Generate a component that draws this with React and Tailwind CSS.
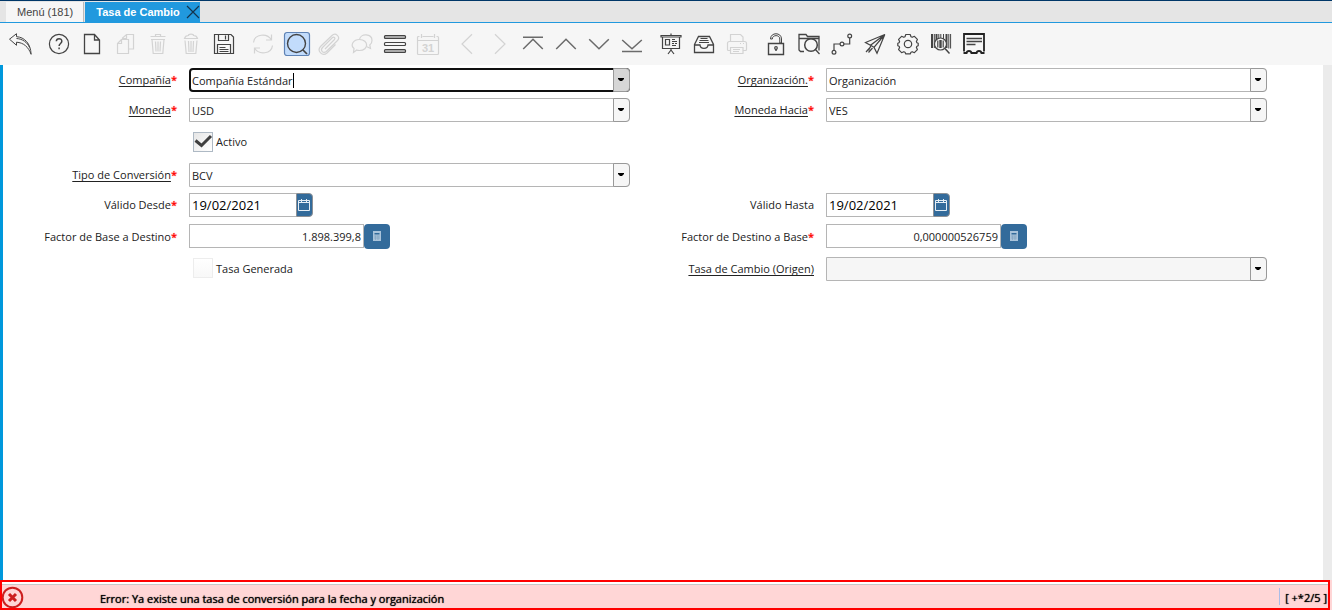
import React, { useState } from 'react';
import clsx from 'clsx';

const ICONS = {
  undo: <path d="M2.500 7.200 9.500 1.700v3c8 .4 14.200 6.800 14.600 17.600C21.500 15 16.500 10.600 9.500 10.200v3.100l-7-6.100M9.500 6.500c6 .3 11 4 13 9" strokeWidth="1" />,
  help: (
    <>
      <circle cx="13" cy="12" r="9.600" />
      <path d="M10.300 9.300c.2-3.600 5.600-3.500 5.500 0 0 2.200-2.700 2.200-2.700 4.700M13.100 15.500v1.700" strokeWidth="1.500" />
    </>
  ),
  file: <path d="M5.500 2.500h10l5 5.500v13.500h-15zM15.500 2.500v5.500h5" strokeWidth="1.300" />,
  copy: (
    <>
      <path d="M9.500 7.500 5.500 11.500v10h11v-14zM9.500 7.500v4h-4" />
      <path d="M10.500 7V6l4-3.500h7v14.500h-5M14.500 2.500v4h-4" />
    </>
  ),
  trash: (
    <path d="M5.500 4.500h15M10.500 4.500v-2h5v2M6 7.500h14M7 7.500l1.200 14h9.600l1.200-14M10.500 9.500l.5 10M13 9.500v10M15.500 9.500l-.5 10" />
  ),
  trashAll: (
    <path d="M6.500 6.500c.5-2 2.500-3 4-3 0-1.800 5-1.800 5 0 1.500 0 3.500 1 4 3zM7 8.500l1.200 13h9.600l1.200-13M10.500 9l.5 11M13 9v11M15.500 9l-.5 11" />
  ),
  save: (
    <>
      <path d="M3.500 2.500h16.500l2.500 2.500v16.500h-19z" />
      <path d="M7.500 2.500v6h10v-6M14.500 3.500v4M6.500 21v-8.500h13v8.500" />
      <path d="M8.500 15.500h6M8.500 17.500h9M8.500 19.500h9" />
    </>
  ),
  refresh: (
    <path d="M3.500 10.500C4.500 2 17 .5 21.500 8M21.500 2.500V8H16M22.500 13.500C21.500 22 9 23.500 4.500 16M4.500 21.500V16H10" />
  ),
  find: (
    <>
      <rect x="1.500" y=".5" width="25" height="23" rx="2.500" fill="#c2dcfc" stroke="#5f83b5" />
      <circle cx="13.500" cy="11.500" r="9" strokeWidth="1.400" />
      <path d="m20 18 4 4" strokeWidth="1.700" />
    </>
  ),
  attach: (
    <path d="M9 17 18.500 7.500c1.200-1.400-.6-3.200-2-2L6.500 15.500c-2.800 3.200.9 6.500 3.800 4L21.500 8.500c3.200-3.600-1.800-8.500-5.500-5L4.500 14.500c-4 4.800 2 10.200 6.500 6.500l8.500-8.500" />
  ),
  chat: (
    <>
      <path d="M10.500 7.500c1-6.500 12.500-6 12.500 1 0 2.200-1 3.500-2.200 4.500l.7 3.500-3.500-1.800" />
      <path d="M10.500 7.500c9.500 0 9.500 11 0 11-1.200 0-2 0-2.800-.5l-3.200 2.500.5-4c-4-3.500-.8-9 5.500-9z" />
    </>
  ),
  grid: (
    <>
      <rect x="2.500" y="3.500" width="21" height="3" rx="1" fill="#aaa" />
      <rect x="2.500" y="10.500" width="21" height="3" rx="1" />
      <rect x="2.500" y="17.500" width="21" height="3" rx="1" fill="#aaa" />
    </>
  ),
  calendar: (
    <>
      <path d="M4.500 4.500h-1c-.7 0-1 .3-1 1v16c0 .7.300 1 1 1h19c.7 0 1-.3 1-1v-16c0-.7-.3-1-1-1h-1M7.500 4.500h11M2.500 8.500h21M6.500 2v4M19.500 2v4" />
      <text x="13" y="19.500" textAnchor="middle" fontSize="11" fontWeight="bold" fontFamily="Liberation Sans, sans-serif" fill="currentColor" stroke="none">31</text>
    </>
  ),
  prev: <path d="M18 2.200 8 12l10 9.800" />,
  next: <path d="m8 2.200 10 9.800L8 21.800" />,
  first: <path d="M3 5.300h20M3.200 17 13 7.300 22.800 17" strokeWidth="1.500" />,
  up: <path d="M3.200 17 13 7.300 22.800 17" strokeWidth="1.500" />,
  down: <path d="M3.200 7.200 13 16.700l9.800-9.500" strokeWidth="1.500" />,
  last: <path d="M3 19.500h20M3.200 8 13 16.800 22.800 8" strokeWidth="1.500" />,
  report: (
    <>
      <path d="M3 3.500h20v1.500H3zM13 1.500v2M4.500 5v11.500h17V5M13 17v2M13 18l-3 4M13 18l3 4" strokeWidth="1.200" />
      <path d="M7.500 7.500h4v5.500h-4zM14 7.500h3M14 9.500h5M14 11.500h2M17 11.500h2M14 13.500h4" />
    </>
  ),
  archive: (
    <>
      <path d="M3.500 12.500 7.500 4.500h11l4 8v8h-19zM3.500 13h5.500c.4 4.500 7.600 4.500 8 0h5.500" strokeWidth="1.300" />
      <path d="M9.500 6.500h7M8.500 8.500h9M8 10.500h10" />
    </>
  ),
  print: (
    <>
      <path d="M6.500 9v-6.500h10l2.500 2.500v4M6.500 18.500h-2c-.7 0-1-.3-1-1v-6c0-1.500 1-2 2-2h15c1 0 2 .5 2 2v6c0 .7-.3 1-1 1h-2.500M6.500 15.500h12.500v6h-12.500z" />
      <path d="M9 17.500h7M9 19.500h6M16 11.500h1M19 11.500h1" />
    </>
  ),
  lock: (
    <>
      <path d="M5.500 11.500h15v11h-15z" strokeWidth="1.400" />
      <path d="M7.500 7c0-7 11-7 11 0v4h-1.700V7c0-4.500-7.500-4.500-7.500 0z" strokeWidth="1" />
      <circle cx="13" cy="16" r="1.300" />
      <path d="M13 17v2" strokeWidth="1.500" />
    </>
  ),
  zoomFolder: (
    <>
      <path d="M8 19.500h-3.500l-1.500-1.500v-15.500h7l1.500 2h11.500v14M3 6.500h20M19 17l4.500 5" strokeWidth="1.300" />
      <circle cx="15" cy="13" r="6.300" strokeWidth="1.500" />
    </>
  ),
  workflow: (
    <>
      <circle cx="5" cy="20.200" r="1.900" />
      <circle cx="13" cy="12" r="1.900" />
      <circle cx="20.700" cy="4" r="1.900" />
      <path d="M5 18.500v-6.500h6M15 12h5.700V6" />
    </>
  ),
  send: <path d="M22.800 2.500 3.500 10.500l5 2.800zM22.800 2.500 8.500 13.300l3.500 2zM22.800 2.500 12 15.300l3 6zM4 20l4.500-5M6.500 20.500l4-4.500M9 13.500l-2.500 5" />,
  gear: (
    <>
      <path d="M10.800 2.500h4.400l.8 2.300 1.200.5 2.200-1 3 3.100-1 2.200.5 1.200 1.300.5v2.400l-1.300.5-.5 1.200 1 2.200-3 3.100-2.200-1-1.200.5-.8 1.700h-4.400l-.8-1.700-1.200-.5-2.200 1-3-3.100 1-2.200-.5-1.200-1.300-.5v-2.400l1.300-.5.5-1.200-1-2.200 3-3.100 2.200 1 1.200-.5z" strokeLinejoin="round" />
      <circle cx="13" cy="12" r="3.700" />
    </>
  ),
  barcode: (
    <>
      <path d="M4 2v14M8.500 2v14M18.500 2v14" strokeWidth="2" />
      <path d="M6.300 2v14M10.800 2v5M12.800 2v4M15.500 2v5M20.800 2v14.500M22.600 2v14.500" strokeWidth="1" />
      <circle cx="12.500" cy="12" r="6" fill="#f6f6f6" />
      <path d="M9.800 8.500v7M15.200 8.500v7" strokeWidth="1.200" />
      <path d="M12.500 8v8" strokeWidth="2.400" />
      <path d="m17 16.500 4.500 5" strokeWidth="1.500" />
    </>
  ),
  receipt: (
    <>
      <path d="M3 19.500v-17.500h20v17.500" stroke="#222" strokeWidth="1.800" />
      <path d="M2.500 21h3c.5-2.800 4.500-2.800 5 0h5c.5-2.800 4.500-2.800 5 0h3" stroke="#222" strokeWidth="2" />
      <path d="M5.500 6.500h15.500M5.500 9.500h15.500M5.500 12.500h9" strokeWidth="1.700" />
    </>
  ),
};

const TOOLBAR = [
  [{ icon: 'undo', title: 'Deshacer' }],
  [
    { icon: 'help', title: 'Ayuda' },
    { icon: 'file', title: 'Nuevo' },
    { icon: 'copy', title: 'Copiar', disabled: true },
    { icon: 'trash', title: 'Eliminar', disabled: true },
    { icon: 'trashAll', title: 'Eliminar selección', disabled: true },
    { icon: 'save', title: 'Guardar' },
  ],
  [
    { icon: 'refresh', title: 'Refrescar', disabled: true },
    { icon: 'find', title: 'Encontrar' },
    { icon: 'attach', title: 'Anexo', disabled: true },
    { icon: 'chat', title: 'Chat', disabled: true },
    { icon: 'grid', title: 'Cambiar vista' },
    { icon: 'calendar', title: 'Historial', disabled: true },
  ],
  [
    { icon: 'prev', title: 'Registro padre', disabled: true },
    { icon: 'next', title: 'Registro detalle', disabled: true },
    { icon: 'first', title: 'Primero', soft: true },
    { icon: 'up', title: 'Anterior', soft: true },
    { icon: 'down', title: 'Siguiente', soft: true },
    { icon: 'last', title: 'Último', soft: true },
  ],
  [
    { icon: 'report', title: 'Informe' },
    { icon: 'archive', title: 'Archivo' },
    { icon: 'print', title: 'Imprimir', disabled: true },
  ],
  [
    { icon: 'lock', title: 'Bloquear' },
    { icon: 'zoomFolder', title: 'Visor' },
    { icon: 'workflow', title: 'Flujo de trabajo' },
    { icon: 'send', title: 'Solicitudes' },
    { icon: 'gear', title: 'Proceso' },
    { icon: 'barcode', title: 'Producto' },
    { icon: 'receipt', title: 'Personalizar' },
  ],
];

const ToolButton = ({ icon, title, disabled, soft }) => (
  <button
    type="button"
    title={title}
    disabled={disabled}
    className={clsx(
      'flex w-[33px] items-center justify-center',
      disabled ? 'text-[#d3d3d3]' : soft ? 'text-[#6b6b6b]' : 'text-[#444]'
    )}
  >
    <svg viewBox="0 0 25 24" className="h-6 w-[25px] overflow-visible" fill="none" stroke="currentColor" strokeWidth="1.200">
      {ICONS[icon]}
    </svg>
  </button>
);

const Label = ({ htmlFor, link, required, children }) => (
  <label htmlFor={htmlFor} className="pb-px text-right whitespace-nowrap">
    <span className={clsx(link && 'underline decoration-1 underline-offset-2 [text-decoration-skip-ink:none]')}>
      {children}
    </span>
    {required && <span className="text-[#f00] [text-shadow:0_0_1px_#f00]">*</span>}
  </label>
);

const Field = ({ children }) => (
  <div className="grid grid-cols-[174px_1fr] items-center gap-3 pr-[10px]">{children}</div>
);

const Combo = ({ id, label, required, value, active, disabled }) => (
  <Field>
    <Label htmlFor={id} link required={required}>{label}</Label>
    <div className="relative">
      <select
        id={id}
        disabled={disabled}
        className={clsx(
          'block h-6 w-full appearance-none text-[#222] opacity-100 outline-none',
          active
            ? 'rounded border-2 border-[#101010] bg-white pl-px'
            : 'rounded-r border border-[#b5b5b5] pt-px pl-[2px]',
          disabled ? 'bg-[#f6f6f6]' : 'bg-white'
        )}
      >
        <option>{value}</option>
      </select>
      {active && <span className="absolute top-[5px] left-[104px] h-[15px] w-px bg-black" />}
      <span
        className={clsx(
          'pointer-events-none absolute inset-y-0 right-0 flex w-[17px] items-center justify-center rounded-r border border-[#999]',
          active ? 'bg-[#d6d6d6]' : 'bg-[#f6f6f6]'
        )}
      >
        <svg viewBox="0 0 7 4" className="h-1 w-[7px]">
          <path d="M0 0h6v1L4 3H2L0 1z" fill="#000" />
        </svg>
      </span>
    </div>
  </Field>
);

const DateBox = ({ id, label, required, value }) => (
  <Field>
    <Label htmlFor={id} required={required}>{label}</Label>
    <div className="flex">
      <input
        id={id}
        type="text"
        defaultValue={value}
        className="h-6 w-[107px] border border-r-0 border-[#b5b5b5] bg-white pl-[2px] text-[13px] text-black outline-none"
      />
      <button
        type="button"
        title="Calendario"
        className="flex h-6 w-[17px] items-center justify-center rounded-r border border-[#8c9095] bg-[#336b9b]"
      >
        <svg viewBox="0 0 13 13" className="h-[13px] w-[13px] shrink-0" fill="none" stroke="#e6eef5">
          <path d="M.5 1.500h11v10H.5zM.5 3.500h11M3.500 0v3M8.500 0v3" />
        </svg>
      </button>
    </div>
  </Field>
);

const NumberBox = ({ id, label, required, value }) => (
  <Field>
    <Label htmlFor={id} required={required}>{label}</Label>
    <div className="flex items-start">
      <input
        id={id}
        type="text"
        defaultValue={value}
        className="h-6 w-[175px] border border-[#b5b5b5] bg-white pt-px pr-[2px] text-right text-[#222] outline-none"
      />
      <button
        type="button"
        title="Calculadora"
        className="flex h-[25px] w-[26px] items-center justify-center rounded bg-[#336b9b]"
      >
        <svg viewBox="0 0 10 11" className="h-[11px] w-[10px]">
          <path d="M1 0h8v10H1z" fill="#a9c3da" />
          <path d="M2.500 2h5v1.500h-5z" fill="#336b9b" />
          <path d="M2 5h6M2 7h6M3.500 4.500V9M6 4.500V9" stroke="#7d9fbe" strokeWidth=".6" />
        </svg>
      </button>
    </div>
  </Field>
);

const CheckBox = ({ label, checked, onChange }) => (
  <Field>
    <span />
    <label className="flex items-center gap-[3px] pb-[2px] pl-1">
      <span className="relative flex">
        <input
          type="checkbox"
          checked={checked}
          onChange={onChange}
          className={clsx(
            'h-5 w-5 appearance-none border',
            checked
              ? 'border-[#aeb9c4] bg-linear-to-br from-[#e6e6e6] to-white'
              : 'border-[#ededed] bg-linear-to-b from-white to-[#f8f8f8]'
          )}
        />
        {checked && (
          <svg viewBox="0 0 20 20" className="pointer-events-none absolute inset-0 h-5 w-5" fill="none">
            <path d="m2.500 8.500 6 5 9.500-9.500" stroke="#3f3f3f" strokeWidth="3" />
          </svg>
        )}
      </span>
      {label}
    </label>
  </Field>
);

const Row = ({ children, className }) => (
  <div className={clsx('grid grid-cols-2 items-center', className)}>{children}</div>
);

const App = () => {
  const [active, setActive] = useState(true);
  const [generated, setGenerated] = useState(false);

  return (
    <div className="flex min-h-screen flex-col bg-white font-['Open_Sans','Noto_Sans',sans-serif] text-[11px] leading-[15px] text-[#222]">
      {/* Window tabs */}
      <nav className="flex h-[23px] items-stretch border-t border-b border-t-[#003768] border-b-[#2199de] bg-[#e5e5e5] pt-px pl-[6px] font-['Liberation_Sans',Arial,sans-serif]">
        <button type="button" className="border-r border-[#bbb] bg-[#f6f6f6] pr-[10px] pl-[11px] text-[#444]">
          Menú (181)
        </button>
        <div className="ml-px flex items-center bg-[#2199de] pl-[11px]">
          <button type="button" className="font-bold text-white">Tasa de Cambio</button>
          <button type="button" title="Cerrar" className="ml-[6px]">
            <svg viewBox="0 0 14 14" className="h-[14px] w-[14px]" stroke="#14344c" strokeWidth="1.200">
              <path d="m1 1 12 12M13 1 1 13" />
            </svg>
          </button>
        </div>
      </nav>

      {/* Toolbar */}
      <div role="toolbar" className="flex h-[42px] gap-[6px] bg-[#f6f6f6] pl-[3px]">
        {TOOLBAR.map((group, i) => (
          <div key={i} className="flex">
            {group.map((item) => (
              <ToolButton key={item.icon} {...item} />
            ))}
          </div>
        ))}
      </div>

      {/* Record form */}
      <main className="flex flex-1 border-l-[3px] border-[#0098dc]">
        <form className="flex flex-1 flex-col gap-[6px] pt-[3px] pr-[46px]">
          <Row>
            <Combo id="client" label="Compañía" required value="Compañía Estándar" active />
            <Combo id="org" label="Organización." required value="Organización" />
          </Row>
          <Row>
            <Combo id="currency" label="Moneda" required value="USD" />
            <Combo id="currencyTo" label="Moneda Hacia" required value="VES" />
          </Row>
          <Row className="h-[29px]">
            <CheckBox label="Activo" checked={active} onChange={() => setActive(!active)} />
          </Row>
          <Row>
            <Combo id="type" label="Tipo de Conversión" required value="BCV" />
          </Row>
          <Row>
            <DateBox id="from" label="Válido Desde" required value="19/02/2021" />
            <DateBox id="to" label="Válido Hasta" value="19/02/2021" />
          </Row>
          <Row className="h-[27px]">
            <NumberBox id="multiply" label="Factor de Base a Destino" required value="1.898.399,8" />
            <NumberBox id="divide" label="Factor de Destino a Base" required value="0,000000526759" />
          </Row>
          <Row className="h-[26px]">
            <CheckBox label="Tasa Generada" checked={generated} onChange={() => setGenerated(!generated)} />
            <Combo id="source" label="Tasa de Cambio (Origen)" value="" disabled />
          </Row>
        </form>
        <div className="w-[9px] bg-[#ebebeb]" />
      </main>

      {/* Status bar */}
      <footer className="bg-[#ffd6d6] pr-[2px]">
        <div className="border-2 border-[#f00] bg-white pt-[2px]">
          <div role="alert" className="flex h-6 items-center border-t border-[#c8c8c8] bg-[#ffd6d6] text-black [text-shadow:0_0_1px_#000]">
            <svg viewBox="0 0 22 22" className="h-[22px] w-[22px] shrink-0" fill="none" stroke="#cc1f1f">
              <circle cx="10.500" cy="11.500" r="9.800" strokeWidth="2" />
              <path d="m7 8 7 7M14 8l-7 7" strokeWidth="3" />
            </svg>
            <span className="flex-1 pt-[3px] pl-[76px]">
              Error: Ya existe una tasa de conversión para la fecha y organización
            </span>
            <span className="border-l border-[#a9bde8] pt-[2px] pr-px pl-[5px]">[ +*2/5 ]</span>
          </div>
        </div>
      </footer>
    </div>
  );
};

export default App;
